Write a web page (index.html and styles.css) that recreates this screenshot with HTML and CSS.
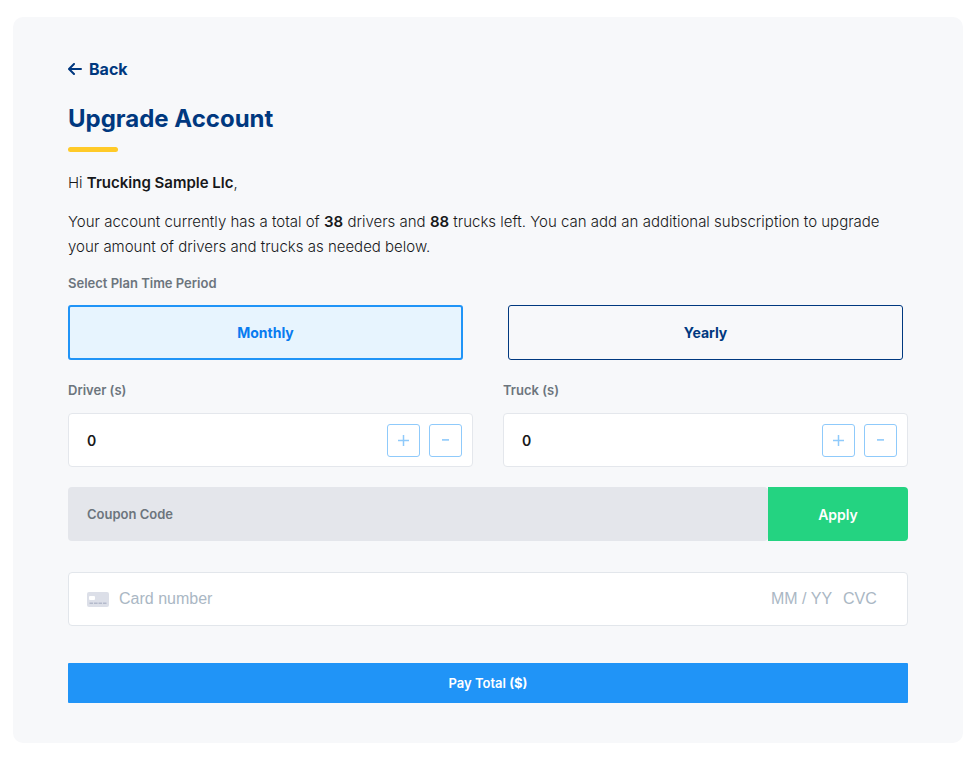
FILE: index.html
```html
<!DOCTYPE html>
<html lang="en">
    <head>
        <meta charset="UTF-8" />
        <meta name="viewport" content="width=device-width, initial-scale=1.0" />
        <title>Upgrade Account</title>
        <link rel="stylesheet" href="styles.css">
    </head>
    <body>
        <main class="panel">
            <a class="back" href="#">
                <svg width="14" height="12" viewBox="0 0 14 12" fill="none" stroke="currentColor" stroke-width="2" stroke-linecap="round" stroke-linejoin="round" aria-hidden="true">
                    <path d="M13 6H1.2M6 1 1 6l5 5" />
                </svg>
                Back
            </a>
            <h1 class="title">Upgrade Account</h1>

            <div class="intro">
                <p>Hi <strong>Trucking Sample Llc</strong>,</p>
                <p>Your account currently has a total of <strong>38</strong> drivers and <strong>88</strong> trucks left. You can add an additional subscription to upgrade your amount of drivers and trucks as needed below.</p>
            </div>

            <form>
                <div class="label" id="period-label">Select Plan Time Period</div>
                <div class="plans" role="group" aria-labelledby="period-label">
                    <button class="plan active" type="button" aria-pressed="true">Monthly</button>
                    <button class="plan" type="button" aria-pressed="false">Yearly</button>
                </div>

                <div class="amounts">
                    <div>
                        <label class="label" for="drivers">Driver (s)</label>
                        <div class="counter">
                            <input type="text" id="drivers" name="drivers" value="0" inputmode="numeric" />
                            <button class="step" type="button" data-step="1" aria-label="Add driver">
                                <svg width="11" height="11" viewBox="0 0 11 11" stroke="currentColor" stroke-width="1.5"><path d="M0 5.5h11M5.5 0v11" /></svg>
                            </button>
                            <button class="step" type="button" data-step="-1" aria-label="Remove driver">
                                <svg width="11" height="11" viewBox="0 0 11 11" stroke="currentColor" stroke-width="1.6"><path d="M2 4.9h7" /></svg>
                            </button>
                        </div>
                    </div>
                    <div>
                        <label class="label" for="trucks">Truck (s)</label>
                        <div class="counter">
                            <input type="text" id="trucks" name="trucks" value="0" inputmode="numeric" />
                            <button class="step" type="button" data-step="1" aria-label="Add truck">
                                <svg width="11" height="11" viewBox="0 0 11 11" stroke="currentColor" stroke-width="1.5"><path d="M0 5.5h11M5.5 0v11" /></svg>
                            </button>
                            <button class="step" type="button" data-step="-1" aria-label="Remove truck">
                                <svg width="11" height="11" viewBox="0 0 11 11" stroke="currentColor" stroke-width="1.6"><path d="M2 4.9h7" /></svg>
                            </button>
                        </div>
                    </div>
                </div>

                <div class="coupon">
                    <input type="text" name="coupon" placeholder="Coupon Code" aria-label="Coupon Code" />
                    <button type="button">Apply</button>
                </div>

                <div class="card">
                    <svg width="22" height="15" viewBox="0 0 22 15" aria-hidden="true">
                        <rect width="22" height="15" rx="2" fill="#dcdfe8" />
                        <rect x="2" y="4" width="6" height="4" rx="1" fill="#fff" />
                        <path d="M2.5 11.2h17" stroke="#b4bacb" stroke-width="1.4" stroke-dasharray="3.6 .9" />
                    </svg>
                    <input class="card-number" type="text" placeholder="Card number" aria-label="Card number" />
                    <input class="card-date" type="text" placeholder="MM / YY" aria-label="Expiry date" />
                    <input class="card-cvc" type="text" placeholder="CVC" aria-label="CVC" />
                </div>

                <button class="pay" type="submit">Pay Total <strong>($)</strong></button>
            </form>
        </main>

        <script>
            document.querySelectorAll('.plan').forEach((plan) => {
                plan.addEventListener('click', () => {
                    document.querySelectorAll('.plan').forEach((item) => {
                        item.classList.toggle('active', item === plan);
                        item.setAttribute('aria-pressed', item === plan);
                    });
                });
            });

            document.querySelectorAll('.step').forEach((button) => {
                button.addEventListener('click', () => {
                    const input = button.parentElement.querySelector('input');
                    const value = (Number(input.value) || 0) + Number(button.dataset.step);
                    input.value = Math.max(0, value);
                });
            });

            document.querySelector('form').addEventListener('submit', (event) => {
                event.preventDefault();
            });
        </script>
    </body>
</html>
```
FILE: styles.css
```css
* {
    box-sizing: border-box;
}

body {
    margin: 17px 17px 14px 13px;
    background-color: #fff;
    color: #17181a;
    font-family: Inter, sans-serif;
}

button,
input {
    font-family: inherit;
    margin: 0;
}

button {
    cursor: pointer;
}

input {
    min-width: 0;
    padding: 0;
    border: none;
    outline: none;
    background: none;
}

.panel {
    padding: 40px 55px;
    border-radius: 10px;
    background-color: #f7f8fa;
}

.back {
    display: inline-flex;
    align-items: center;
    gap: 7px;
    color: #00387f;
    font-size: 16px;
    font-weight: 700;
    line-height: 24px;
    text-decoration: none;
    vertical-align: top;
}

.title {
    margin: 22px 0 0;
    color: #00387f;
    font-size: 24px;
    font-weight: 700;
    line-height: 32px;
}

.title::after {
    content: "";
    display: block;
    width: 50px;
    height: 5px;
    margin-top: 12px;
    border-radius: 3px;
    background-color: #ffca28;
}

.intro {
    margin: 18px 0 16px;
    font-size: 15px;
    font-weight: 300;
    line-height: 25px;
}

.intro p {
    margin: 0;
}

.intro p + p {
    margin-top: 14px;
}

.intro strong {
    font-weight: 600;
}

.label {
    display: block;
    color: #6c757d;
    font-size: 13px;
    font-weight: 600;
    line-height: 16px;
}

.plans {
    display: grid;
    grid-template-columns: 1fr 1fr;
    gap: 45px;
    margin: 14px 5px 22px 0;
}

.plan {
    height: 55px;
    border: 1px solid #00387f;
    border-radius: 3px;
    background: none;
    color: #00387f;
    font-size: 14px;
    font-weight: 700;
}

.plan.active {
    border: 2px solid #2094f7;
    background-color: #e7f4fe;
    color: #087bf0;
}

.amounts {
    display: grid;
    grid-template-columns: 1fr 1fr;
    gap: 30px;
}

.counter {
    display: flex;
    align-items: center;
    gap: 9px;
    height: 54px;
    margin-top: 15px;
    padding: 0 10px 0 18px;
    border: 1px solid #e4e7ec;
    border-radius: 4px;
    background-color: #fff;
}

.counter input {
    flex: 1;
    color: #17181a;
    font-size: 14px;
    font-weight: 600;
}

.step {
    display: flex;
    align-items: center;
    justify-content: center;
    width: 33px;
    height: 33px;
    padding: 0;
    border: 1px solid #8fcafb;
    border-radius: 3px;
    background: none;
    color: #8fcafb;
}

.coupon {
    display: flex;
    height: 54px;
    margin-top: 20px;
}

.coupon input {
    flex: 1;
    padding: 0 19px;
    border-radius: 4px;
    background-color: #e4e6eb;
    font-size: 13px;
    font-weight: 600;
}

.coupon input::placeholder {
    color: #6c757d;
}

.coupon button {
    width: 140px;
    border: none;
    border-radius: 0 4px 4px 0;
    background-color: #24d381;
    color: #fff;
    font-size: 14px;
    font-weight: 600;
}

.card {
    display: flex;
    align-items: center;
    height: 54px;
    margin-top: 31px;
    padding: 0 18px;
    border: 1px solid #e2e6eb;
    border-radius: 4px;
    background-color: #fff;
}

.card input {
    font-family: "Liberation Sans", Arial, sans-serif;
    font-size: 16px;
}

.card input::placeholder {
    color: #aab7c4;
}

.card-number {
    flex: 1;
    margin-left: 10px;
}

.card .card-date {
    width: 72px;
}

.card .card-cvc {
    width: 46px;
}

.pay {
    display: block;
    width: 100%;
    height: 40px;
    margin-top: 37px;
    border: none;
    border-radius: 1px;
    background-color: #2094f7;
    color: #fff;
    font-size: 13px;
    font-weight: 600;
}

.pay strong {
    font-weight: 700;
}
```
